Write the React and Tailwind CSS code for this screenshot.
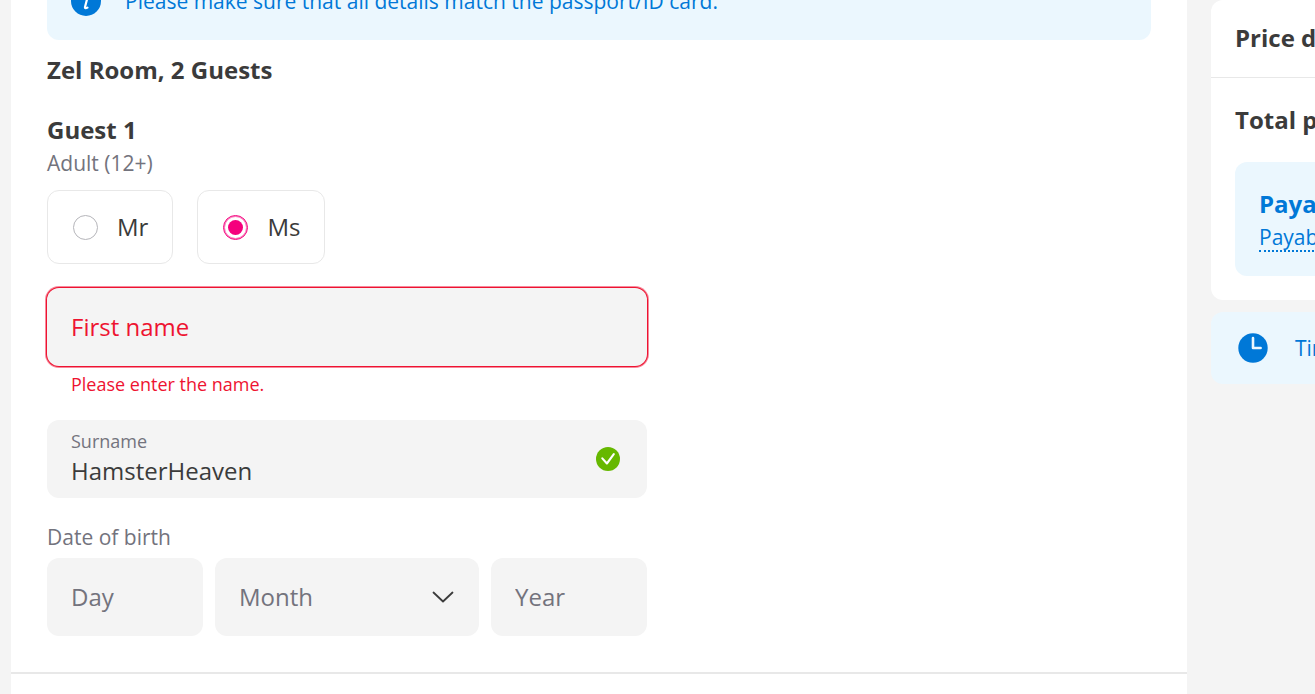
import { useState } from 'react';

const months = [
  'January', 'February', 'March', 'April', 'May', 'June',
  'July', 'August', 'September', 'October', 'November', 'December'
];

const InfoIcon = () => (
  <svg className="size-[30px] shrink-0" viewBox="0 0 30 30" aria-hidden="true">
    <circle cx="15" cy="15" r="15" fill="#0078d7" />
    <circle cx="16.4" cy="8" r="1.8" fill="#fff" />
    <path d="M12.4 12.6h3.8l-2.2 8.4c-.2 1.4 1 1.4 2.4.6" fill="none" stroke="#fff" strokeWidth="2.2" strokeLinecap="round" strokeLinejoin="round" />
  </svg>
);

const ClockIcon = () => (
  <svg className="size-[30px] shrink-0" viewBox="0 0 30 30" aria-hidden="true">
    <circle cx="15" cy="15" r="14.7" fill="#0078d7" />
    <path d="M15 5v10h7.6" fill="none" stroke="#ebf7fe" strokeWidth="2.6" strokeLinecap="round" strokeLinejoin="round" />
  </svg>
);

const ValidIcon = () => (
  <svg className="size-6 shrink-0" viewBox="0 0 24 24" aria-hidden="true">
    <circle cx="12" cy="12" r="12" fill="#66b800" />
    <path d="M6.3 11.4l4.6 5.1L17.8 7.2" fill="none" stroke="#fff" strokeWidth="2.1" strokeLinecap="round" strokeLinejoin="round" />
  </svg>
);

const TitleOption = ({ value, selected, onSelect }) => (
  <label className="flex h-[74px] items-center gap-[19px] rounded-xl border border-[#e8e8e8] pr-6 pl-[25px] text-2xl/9 text-[#3b3b3b]">
    <input
      type="radio"
      name="title"
      value={value}
      checked={selected}
      onChange={() => onSelect(value)}
      className="grid size-[25px] appearance-none place-items-center rounded-full border border-[#b5b5ba] bg-white checked:border-[#f5007d] checked:shadow-[inset_0_0_0_1px_#fa80be] checked:before:size-[15px] checked:before:rounded-full checked:before:bg-[#f5007d]"
    />
    {value}
  </label>
);

const GuestForm = () => {
  const [title, setTitle] = useState('Ms');
  const [guest, setGuest] = useState({
    firstName: '',
    surname: 'HamsterHeaven',
    day: '',
    month: '',
    year: ''
  });

  const handleChange = (e) => {
    setGuest({ ...guest, [e.target.name]: e.target.value });
  };

  return (
    <form className="max-w-[600px]">
      <h3 className="mt-6 text-2xl/9 font-bold">Guest 1</h3>
      <p className="text-[21px]/[30px] text-[#73737d]">Adult (12+)</p>

      <div className="mt-3 flex gap-6">
        <TitleOption value="Mr" selected={title === 'Mr'} onSelect={setTitle} />
        <TitleOption value="Ms" selected={title === 'Ms'} onSelect={setTitle} />
      </div>

      <input
        name="firstName"
        aria-label="First name"
        aria-describedby="firstName-error"
        placeholder="First name"
        value={guest.firstName}
        onChange={handleChange}
        className="mt-6 block h-[78px] w-full rounded-xl bg-[#f4f4f4] px-6 pb-0.5 text-2xl/9 shadow-[0_0_0_1px_#ee1331,0_0_0_2px_#f7899b] outline-none placeholder:text-[#ee1331]"
      />
      <p id="firstName-error" className="mt-1.5 px-6 text-lg/6 text-[#ee1331]">
        Please enter the name.
      </p>

      <div className="mt-6 flex items-center rounded-xl bg-[#f4f4f4] py-[9px] pr-[27px] pl-6">
        <div className="min-w-0 flex-1">
          <label htmlFor="surname" className="block text-lg/6 text-[#73737d]">Surname</label>
          <input
            id="surname"
            name="surname"
            value={guest.surname}
            onChange={handleChange}
            className="block h-9 w-full bg-transparent text-2xl/9 outline-none"
          />
        </div>
        <ValidIcon />
      </div>

      <fieldset className="mt-6">
        <legend className="text-[21px]/[30px] text-[#73737d]">Date of birth</legend>
        <div className="mt-1.5 flex gap-3">
          <input
            name="day"
            aria-label="Day"
            placeholder="Day"
            value={guest.day}
            onChange={handleChange}
            className="h-[78px] w-[156px] rounded-xl bg-[#f4f4f4] px-6 pb-0.5 text-2xl/9 outline-none placeholder:text-[#73737d]"
          />
          <div className="relative min-w-0 flex-1">
            <select
              name="month"
              aria-label="Month"
              value={guest.month}
              onChange={handleChange}
              className="h-[78px] w-full appearance-none rounded-xl bg-[#f4f4f4] px-6 text-2xl/9 text-[#73737d] outline-none"
            >
              <option value="">Month</option>
              {months.map((month) => (
                <option key={month} value={month}>{month}</option>
              ))}
            </select>
            <svg className="pointer-events-none absolute top-[27px] right-6 size-6" viewBox="0 0 24 24" aria-hidden="true">
              <path d="M2.5 7.5L12 16.5l9.5-9" fill="none" stroke="#3b3b3b" strokeWidth="1.8" strokeLinecap="round" strokeLinejoin="round" />
            </svg>
          </div>
          <input
            name="year"
            aria-label="Year"
            placeholder="Year"
            value={guest.year}
            onChange={handleChange}
            className="h-[78px] w-[156px] rounded-xl bg-[#f4f4f4] px-6 pb-0.5 text-2xl/9 outline-none placeholder:text-[#73737d]"
          />
        </div>
      </fieldset>
    </form>
  );
};

const PriceSummary = () => (
  <aside className="w-26 shrink-0 overflow-hidden whitespace-nowrap">
    <div className="w-96 rounded-xl bg-white">
      <h2 className="border-b border-[#e8e8e8] px-6 pt-5 pb-[21px] text-2xl/9 font-bold">Price details</h2>
      <div className="p-6">
        <p className="text-2xl/9 font-bold">Total price</p>
        <div className="mt-6 rounded-xl bg-[#ebf7fe] p-6 text-[#0078d7]">
          <p className="text-2xl/9 font-bold">Payable now</p>
          <a href="#payable" className="inline-block h-[30px] border-b-2 border-dotted border-[#0078d7] align-top text-[21px]/[30px]">
            Payable later
          </a>
        </div>
      </div>
    </div>
    <div className="mt-3 flex h-[72px] w-96 items-center gap-[27px] rounded-xl bg-[#ebf7fe] px-[27px] text-[21px]/[30px] text-[#0078d7]">
      <ClockIcon />
      Time left
    </div>
  </aside>
);

const App = () => {
  return (
    <div className="flex min-h-screen gap-6 overflow-hidden bg-[#f4f4f4] pl-[11px] font-['Open_Sans',sans-serif] text-[#3b3b3b]">
      <main className="-mt-[38px] min-w-0 flex-1 bg-white">
        <section className="border-b-2 border-[#e8e8e8] px-9 pb-9">
          <div className="flex items-center gap-6 rounded-xl bg-[#ebf7fe] p-6 text-[21px]/[30px] text-[#0078d7]">
            <InfoIcon />
            <p>Please make sure that all details match the passport/ID card.</p>
          </div>
          <h2 className="mt-3 text-2xl/9 font-bold">Zel Room, 2 Guests</h2>
          <GuestForm />
        </section>
      </main>
      <PriceSummary />
    </div>
  );
};

export default App;
